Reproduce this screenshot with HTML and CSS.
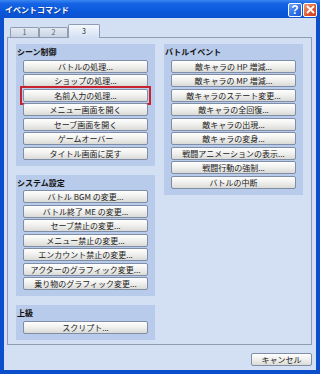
FILE: index.html
```html
<!DOCTYPE html>
<html lang="ja">
  <head>
    <meta charset="UTF-8" />
    <meta name="viewport" content="width=device-width, initial-scale=1.0" />
    <title>イベントコマンド</title>
    <link rel="stylesheet" href="styles.css">
  </head>

  <body>
    <div class="window">
      <div class="titlebar">
        <span class="title">イベントコマンド</span>
        <div class="caption-btns">
          <span class="cap help">?</span>
          <span class="cap close">
            <svg width="9" height="9" viewBox="0 0 9 9">
              <path d="M1 1 L8 8 M8 1 L1 8" stroke="#fff" stroke-width="1.8" />
            </svg>
          </span>
        </div>
      </div>

      <div class="client">
        <div class="tabs">
          <div class="tab">1</div>
          <div class="tab">2</div>
          <div class="tab active">3</div>
        </div>

        <div class="panel">
          <div class="col">
            <div class="group">
              <div class="group-label">シーン制御</div>
              <button class="btn">バトルの処理...</button>
              <button class="btn">ショップの処理...</button>
              <div class="mark">
                <button class="btn">名前入力の処理...</button>
              </div>
              <button class="btn">メニュー画面を開く</button>
              <button class="btn">セーブ画面を開く</button>
              <button class="btn">ゲームオーバー</button>
              <button class="btn">タイトル画面に戻す</button>
            </div>
            <div class="group">
              <div class="group-label">システム設定</div>
              <button class="btn">バトル BGM の変更...</button>
              <button class="btn">バトル終了 ME の変更...</button>
              <button class="btn">セーブ禁止の変更...</button>
              <button class="btn">メニュー禁止の変更...</button>
              <button class="btn">エンカウント禁止の変更...</button>
              <button class="btn">アクターのグラフィック変更...</button>
              <button class="btn">乗り物のグラフィック変更...</button>
            </div>
            <div class="group">
              <div class="group-label">上級</div>
              <button class="btn">スクリプト...</button>
            </div>
          </div>

          <div class="col">
            <div class="group">
              <div class="group-label">バトルイベント</div>
              <button class="btn">敵キャラの HP 増減...</button>
              <button class="btn">敵キャラの MP 増減...</button>
              <button class="btn">敵キャラのステート変更...</button>
              <button class="btn">敵キャラの全回復...</button>
              <button class="btn">敵キャラの出現...</button>
              <button class="btn">敵キャラの変身...</button>
              <button class="btn">戦闘アニメーションの表示...</button>
              <button class="btn">戦闘行動の強制...</button>
              <button class="btn">バトルの中断</button>
            </div>
          </div>
        </div>

        <div class="footer">
          <button class="btn cancel">キャンセル</button>
        </div>
      </div>
    </div>
  </body>
</html>
```

FILE: styles.css
```css
body {
  margin: 0;
  font-family: "Noto Sans CJK JP", "DejaVu Sans", sans-serif;
  background: #d3e0f4;
}

.window {
  width: 320px;
  height: 374px;
  box-sizing: border-box;
  background: #0b4fcc;
  display: flex;
  flex-direction: column;
}

.titlebar {
  height: 18px;
  display: flex;
  align-items: center;
  justify-content: space-between;
  padding: 0 3px 0 5px;
  background: linear-gradient(#3a86f2 0%, #1664e4 20%, #0a58dc 60%, #0a51cf 100%);
}

.title {
  color: #fff;
  font-size: 8px;
  font-weight: bold;
  text-shadow: 1px 1px 0 #0a3a9a;
}

.caption-btns {
  display: flex;
  gap: 1px;
  margin-top: 1px;
}

.cap {
  width: 14px;
  height: 14px;
  box-sizing: border-box;
  border: 1px solid #fff;
  border-radius: 2px;
  display: flex;
  align-items: center;
  justify-content: center;
  color: #fff;
  font-family: "Liberation Sans", sans-serif;
  font-weight: bold;
  font-size: 12px;
}

.help {
  background: linear-gradient(135deg, #6fa4f8, #2a6de8 60%, #1c58d4);
}

.close {
  background: linear-gradient(135deg, #f0a07c, #e0582e 55%, #c8401c);
}

.client {
  flex: 1;
  margin: 0 4px 4px 4px;
  background: #d3e0f4;
  padding: 6px 4px 0 3px;
  display: flex;
  flex-direction: column;
}

.tabs {
  display: flex;
  align-items: flex-end;
  height: 13px;
  padding-left: 3px;
  position: relative;
  z-index: 1;
}

.tab {
  width: 29px;
  height: 10px;
  box-sizing: border-box;
  border: 1px solid #8e9db3;
  border-bottom: none;
  border-radius: 2px 2px 0 0;
  background: linear-gradient(#e4eaf3, #c8d3e3);
  color: #55606e;
  font-size: 7px;
  line-height: 9px;
  text-align: center;
}

.tab.active {
  width: 32px;
  height: 14px;
  margin-bottom: -1px;
  background: linear-gradient(#f4f7fc, #d3e0f4);
  color: #222;
  line-height: 13px;
}

.panel {
  height: 308px;
  box-sizing: border-box;
  border: 1px solid #8e9db3;
  background: #d3e0f4;
  padding: 6px 8px 0 8px;
  display: grid;
  grid-template-columns: 1fr 1fr;
  column-gap: 9px;
  align-items: start;
}

.col {
  display: flex;
  flex-direction: column;
  gap: 9px;
}

.group {
  background: #b8cbea;
  padding: 2px 7px 6px 7px;
  display: flex;
  flex-direction: column;
  gap: 1.5px;
}

.group-label {
  height: 12px;
  font-size: 8px;
  font-weight: bold;
  line-height: 11px;
  color: #111;
  margin-left: -6px;
}

.btn {
  height: 13px;
  padding: 0;
  border: 1px solid #7f8ea6;
  border-radius: 2px;
  background: linear-gradient(#ffffff, #efefed 50%, #dadad7);
  color: #222;
  font-family: "Noto Sans CJK JP", "DejaVu Sans", sans-serif;
  font-size: 8px;
  line-height: 11px;
  text-align: center;
  white-space: nowrap;
}

.mark {
  display: flex;
  flex-direction: column;
  margin: -3px;
  padding: 1px;
  border: 2px solid #c8222c;
}

.footer {
  display: flex;
  justify-content: flex-end;
  padding-top: 8px;
}

.cancel {
  width: 61px;
}
```
